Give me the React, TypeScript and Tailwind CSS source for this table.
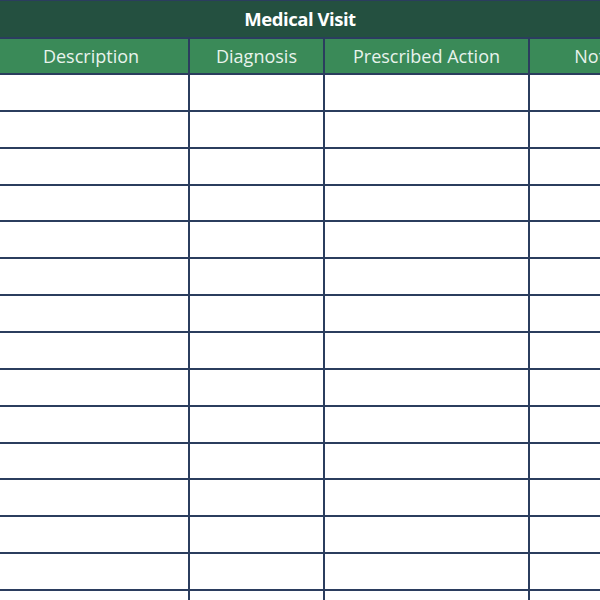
import React from "react";

const columns = [
  { label: "Description", width: "w-[196px]" },
  { label: "Diagnosis", width: "w-[135px]" },
  { label: "Prescribed Action", width: "w-[205px]" },
  { label: "Notes", width: "w-[140px]" },
];

const rows = Array.from({ length: 15 });

export default function App() {
  return (
    <div
      className="w-[600px] h-[600px] overflow-hidden bg-white"
      style={{ fontFamily: '"Open Sans", "Noto Sans", sans-serif' }}
    >
      {/* Title bar */}
      <div className="w-[600px] h-[39px] bg-[#245040] border-t border-b-2 border-[#2b3d5e] flex items-center justify-center">
        <span className="text-white font-bold text-[18.5px] tracking-tight">Medical Visit</span>
      </div>

      <div className="ml-[-6px] w-[700px]">
        {/* Column headers */}
        <div className="flex h-[36px] bg-[#3a8a58] border-b-2 border-[#2b3d5e]">
          {columns.map((col) => (
            <div
              key={col.label}
              className={`${col.width} shrink-0 border-r-2 border-[#2b3d5e] flex items-center justify-center text-[#e8f3ec] text-[18px]`}
            >
              {col.label}
            </div>
          ))}
        </div>

        {/* Empty rows */}
        {rows.map((_, i) => (
          <div key={i} className="flex h-[36.86px] border-b-2 border-[#2b3d5e]">
            {columns.map((col) => (
              <div key={col.label} className={`${col.width} shrink-0 border-r-2 border-[#2b3d5e]`} />
            ))}
          </div>
        ))}
      </div>
    </div>
  );
}
